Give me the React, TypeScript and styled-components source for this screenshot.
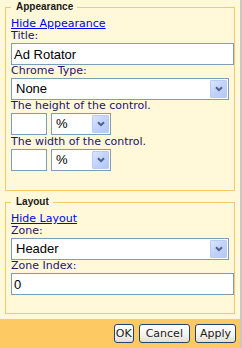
import React from "react";
import styled, { createGlobalStyle } from "styled-components";

const Global = createGlobalStyle`
  html, body { margin: 0; padding: 0; }
  body {
    width: 242px;
    height: 348px;
    overflow: hidden;
    background: #fff9d9;
    font-family: "DejaVu Sans", Verdana, sans-serif;
  }
`;

const Frame = styled.div`
  width: 242px;
  height: 348px;
  box-sizing: border-box;
  border-right: 2px solid #cbc8c0;
  background: #fff9d9;
  display: flex;
  flex-direction: column;
`;

const Body = styled.div`
  flex: 1;
  padding: 1px 5px 0 5px;
  display: flex;
  flex-direction: column;
  gap: 5px;
`;

const Group = styled.fieldset`
  margin: 0;
  min-width: 0;
  border: 1px solid #f7c96c;
  padding: 5px 0 18px 5px;
  display: flex;
  flex-direction: column;
  align-items: flex-start;
`;

const Legend = styled.legend`
  padding: 0 4px 0 5px;
  margin: 0;
  font: bold 10px/12px "Liberation Sans", Arial, sans-serif;
  color: #1a1a1a;
`;

const ToggleLink = styled.a`
  font-size: 11px;
  line-height: 12px;
  color: #0000ee;
  text-decoration: underline;
  cursor: pointer;
`;

const Label = styled.label`
  display: block;
  font-size: 11px;
  line-height: 12px;
  color: #1d1270;
`;

const TextBox = styled.input<{ $width?: number }>`
  box-sizing: border-box;
  width: ${(p) => (p.$width ? `${p.$width}px` : "100%")};
  height: 22px;
  margin: 1px 0 0;
  padding: 0 2px;
  border: 1px solid #7f9db9;
  background: #ffffff;
  font: 13px "Liberation Sans", Arial, sans-serif;
  color: #000;
  outline: none;
`;

const Combo = styled.div<{ $width: number }>`
  box-sizing: border-box;
  width: ${(p) => p.$width}px;
  height: 22px;
  margin-top: 1px;
  padding: 1px 1px 1px 4px;
  border: 1px solid #7f9db9;
  background: #ffffff;
  display: flex;
  align-items: center;
  justify-content: space-between;
  font: 13px "Liberation Sans", Arial, sans-serif;
  color: #000;
`;

const ComboValue = styled.span`
  line-height: 18px;
`;

const DropButton = styled.span`
  box-sizing: border-box;
  width: 17px;
  height: 18px;
  border: 1px solid #b9cbf3;
  border-radius: 1px;
  background: linear-gradient(135deg, #dce6fe 0%, #c3d4fc 45%, #b4c8f6 100%);
  display: flex;
  align-items: center;
  justify-content: center;
`;

const SizeRow = styled.div`
  display: flex;
  gap: 4px;
  margin-bottom: 1px;
`;

const Footer = styled.div`
  height: 29px;
  box-sizing: border-box;
  background: #fcc962;
  display: flex;
  justify-content: flex-end;
  align-items: flex-start;
  gap: 5px;
  padding: 5px 4px 0 0;
`;

const ActionButton = styled.button<{ $pad?: number }>`
  height: 19px;
  box-sizing: border-box;
  padding: 0 ${(p) => p.$pad ?? 5}px;
  border: 1px solid #23446e;
  border-radius: 3px;
  background: linear-gradient(#ffffff 0%, #f3f2ee 60%, #e2dfd6 100%);
  font: 11px/17px "DejaVu Sans", Verdana, sans-serif;
  color: #1a1a1a;
  cursor: pointer;
`;

const Chevron = () => (
  <svg width="8" height="6" viewBox="0 0 8 6">
    <path d="M1 1.2 L4 4.2 L7 1.2" fill="none" stroke="#4d6185" strokeWidth="2" />
  </svg>
);

const Select = ({ value, width }: { value: string; width: number }) => (
  <Combo $width={width}>
    <ComboValue>{value}</ComboValue>
    <DropButton>
      <Chevron />
    </DropButton>
  </Combo>
);

export default function App() {
  return (
    <>
      <Global />
      <Frame>
        <Body>
          <Group>
            <Legend>Appearance</Legend>
            <ToggleLink>Hide Appearance</ToggleLink>
            <Label>Title:</Label>
            <TextBox defaultValue="Ad Rotator" />
            <Label>Chrome Type:</Label>
            <Select value="None" width={218} />
            <Label>The height of the control.</Label>
            <SizeRow>
              <TextBox $width={36} />
              <Select value="%" width={60} />
            </SizeRow>
            <Label>The width of the control.</Label>
            <SizeRow>
              <TextBox $width={36} />
              <Select value="%" width={60} />
            </SizeRow>
          </Group>
          <Group>
            <Legend>Layout</Legend>
            <ToggleLink>Hide Layout</ToggleLink>
            <Label>Zone:</Label>
            <Select value="Header" width={218} />
            <Label>Zone Index:</Label>
            <TextBox defaultValue="0" />
          </Group>
        </Body>
        <Footer>
          <ActionButton $pad={1}>OK</ActionButton>
          <ActionButton $pad={6}>Cancel</ActionButton>
          <ActionButton $pad={4}>Apply</ActionButton>
        </Footer>
      </Frame>
    </>
  );
}
